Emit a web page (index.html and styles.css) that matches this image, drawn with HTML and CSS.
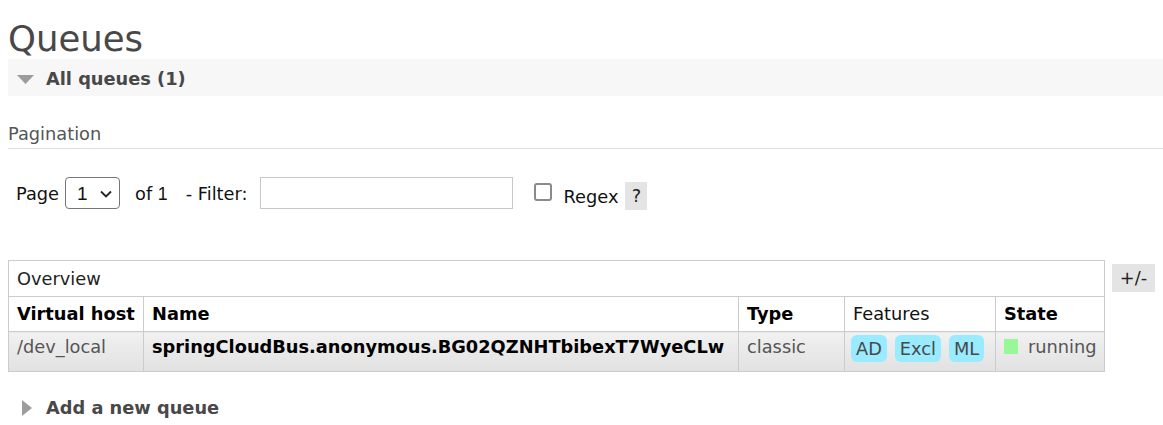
FILE: index.html
```html
<!DOCTYPE html>
<html>
<head>
<meta charset="utf-8">
<title>Queues</title>
<link rel="stylesheet" href="styles.css">
</head>
<body>
<h1 class="page-title">Queues</h1>
<div class="section">
  <h2 class="section-head">
    <svg class="tri tri-down" width="17" height="9" viewBox="0 0 17 9"><polygon points="0,0 17,0 8.5,9" fill="#9c9c9c"/></svg>
    All queues (1)
  </h2>
  <div class="section-body">
    <h3 class="pag-title">Pagination</h3>
    <div class="pag-row">
      <span class="lbl lbl-page">Page</span>
      <span class="select-wrap">
        <select class="page-select"><option>1</option></select>
        <svg class="chev" width="12" height="8" viewBox="0 0 12 8"><polyline points="1,1.5 6,6.5 11,1.5" fill="none" stroke="#222" stroke-width="1.8"/></svg>
      </span>
      <span class="lbl lbl-of">of <span class="num">1</span></span>
      <span class="lbl lbl-filter">- Filter:</span>
      <input class="filter-input" type="text">
      <input class="regex-check" type="checkbox">
      <span class="lbl lbl-regex">Regex</span>
      <span class="help">?</span>
    </div>
    <div class="table-wrap">
      <table class="queues">
        <colgroup>
          <col class="c-vhost"><col class="c-name"><col class="c-type"><col class="c-feat"><col class="c-state">
        </colgroup>
        <tr class="group-row"><td colspan="5">Overview</td></tr>
        <tr class="head-row">
          <th>Virtual host</th>
          <th>Name</th>
          <th>Type</th>
          <th class="plain">Features</th>
          <th>State</th>
        </tr>
        <tr class="data-row">
          <td class="muted">/dev_local</td>
          <td class="qname">springCloudBus.anonymous.BG02QZNHTbibexT7WyeCLw</td>
          <td class="muted">classic</td>
          <td class="feat"><span class="badges"><span class="badge">AD</span><span class="badge">Excl</span><span class="badge">ML</span></span></td>
          <td class="muted"><span class="status-sq"></span>running</td>
        </tr>
      </table>
      <span class="plusminus">+/-</span>
    </div>
  </div>
</div>
<h2 class="section-head closed">
  <svg class="tri tri-right" width="10" height="16" viewBox="0 0 10 16"><polygon points="0,0 10,8 0,16" fill="#9c9c9c"/></svg>
  Add a new queue
</h2>
</body>
</html>
```
FILE: styles.css
```css
html, body {
  margin: 0;
  padding: 0;
  background: #fff;
}
body {
  padding-left: 8px;
  font-family: "DejaVu Sans", Verdana, sans-serif;
  font-size: 17.8px;
  color: #484848;
  overflow: hidden;
}
.page-title {
  margin: 21px 0 2px;
  font-size: 35.5px;
  line-height: 36px;
  font-weight: normal;
  color: #484848;
}
.section-head {
  margin: 0;
  display: flex;
  align-items: center;
  height: 34px;
  padding-top: 3px;
  line-height: 34px;
  font-size: 17.8px;
  font-weight: bold;
  color: #484848;
  background: #f7f7f7;
}
.section-head .tri-down {
  margin-left: 9px;
  margin-right: 12px;
}
.section-head.closed {
  background: transparent;
  margin-top: 16px;
}
.section-head .tri-right {
  margin-left: 14px;
  margin-right: 14px;
}
.pag-title {
  margin: 28px 0 0;
  padding-bottom: 4px;
  font-size: 17.8px;
  line-height: 20px;
  font-weight: normal;
  color: #555;
  border-bottom: 1px solid #dedede;
}
.pag-row {
  display: flex;
  align-items: center;
  height: 32px;
  margin-top: 28px;
  padding-left: 8px;
  color: #111;
}
.lbl {
  line-height: 20px;
  margin-top: 2px;
}
.select-wrap {
  position: relative;
  display: inline-block;
  margin-left: 6px;
  height: 32px;
}
.page-select {
  appearance: none;
  -webkit-appearance: none;
  width: 55px;
  height: 32px;
  margin: 0;
  padding: 0 0 0 11px;
  border: 1px solid #767676;
  border-radius: 4px;
  background: #fff;
  font-family: "Liberation Sans", Arial, sans-serif;
  font-size: 19px;
  color: #111;
}
.chev {
  position: absolute;
  left: 35px;
  top: 13px;
  pointer-events: none;
}
.lbl-of {
  margin-left: 15px;
}
.num {
  font-family: "Liberation Sans", Arial, sans-serif;
}
.lbl-filter {
  margin-left: 18px;
}
.filter-input {
  box-sizing: border-box;
  width: 253px;
  height: 32px;
  margin: 0 0 0 12px;
  border: 1px solid #c8c8c8;
  padding: 0 4px;
  font: inherit;
}
.regex-check {
  appearance: none;
  -webkit-appearance: none;
  box-sizing: border-box;
  width: 18px;
  height: 18px;
  margin: 6px 0 0 21px;
  border: 2px solid #8a8a8a;
  border-radius: 3px;
  background: #fff;
  align-self: flex-start;
}
.lbl-regex {
  margin-left: 12px;
  margin-top: 7px;
}
.help {
  display: inline-block;
  width: 22px;
  height: 28px;
  margin-left: 7px;
  margin-top: 5px;
  background: #e4e4e4;
  text-align: center;
  line-height: 28px;
  color: #222;
}
.table-wrap {
  display: flex;
  align-items: flex-start;
  margin-top: 51px;
}
.queues {
  border-collapse: collapse;
  table-layout: fixed;
  width: 1096px;
}
.c-vhost { width: 135px; }
.c-name { width: 595px; }
.c-type { width: 106px; }
.c-feat { width: 151px; }
.c-state { width: 109px; }
.queues td, .queues th {
  border: 1px solid #cccccc;
  padding: 0 8px;
  text-align: left;
  white-space: nowrap;
}
.group-row td {
  line-height: 35px;
  color: #222;
  font-weight: normal;
}
.head-row th {
  line-height: 34px;
  font-weight: bold;
  color: #000;
}
.head-row th.plain {
  font-weight: normal;
  color: #111;
}
.data-row td {
  box-sizing: border-box;
  height: 40px;
  vertical-align: top;
  padding-top: 5px;
  line-height: 20px;
  background: linear-gradient(#f1f1f1, #e1e1e1);
}
.muted {
  color: #555;
}
.qname {
  font-weight: bold;
  color: #000;
}
.data-row td.feat {
  padding: 3px 6px 0;
}
.badges {
  display: flex;
  gap: 8px;
}
.badge {
  display: inline-block;
  padding: 4px 5px 3px;
  line-height: 20px;
  border-radius: 6px;
  background: #99ebff;
  color: #484848;
}
.status-sq {
  display: inline-block;
  width: 14px;
  height: 15px;
  margin-right: 10px;
  vertical-align: -1px;
  background: #98f898;
}
.plusminus {
  display: inline-block;
  margin-left: 7px;
  margin-top: 4px;
  width: 43px;
  height: 28px;
  line-height: 28px;
  text-align: center;
  background: #e4e4e4;
  color: #222;
}
```
